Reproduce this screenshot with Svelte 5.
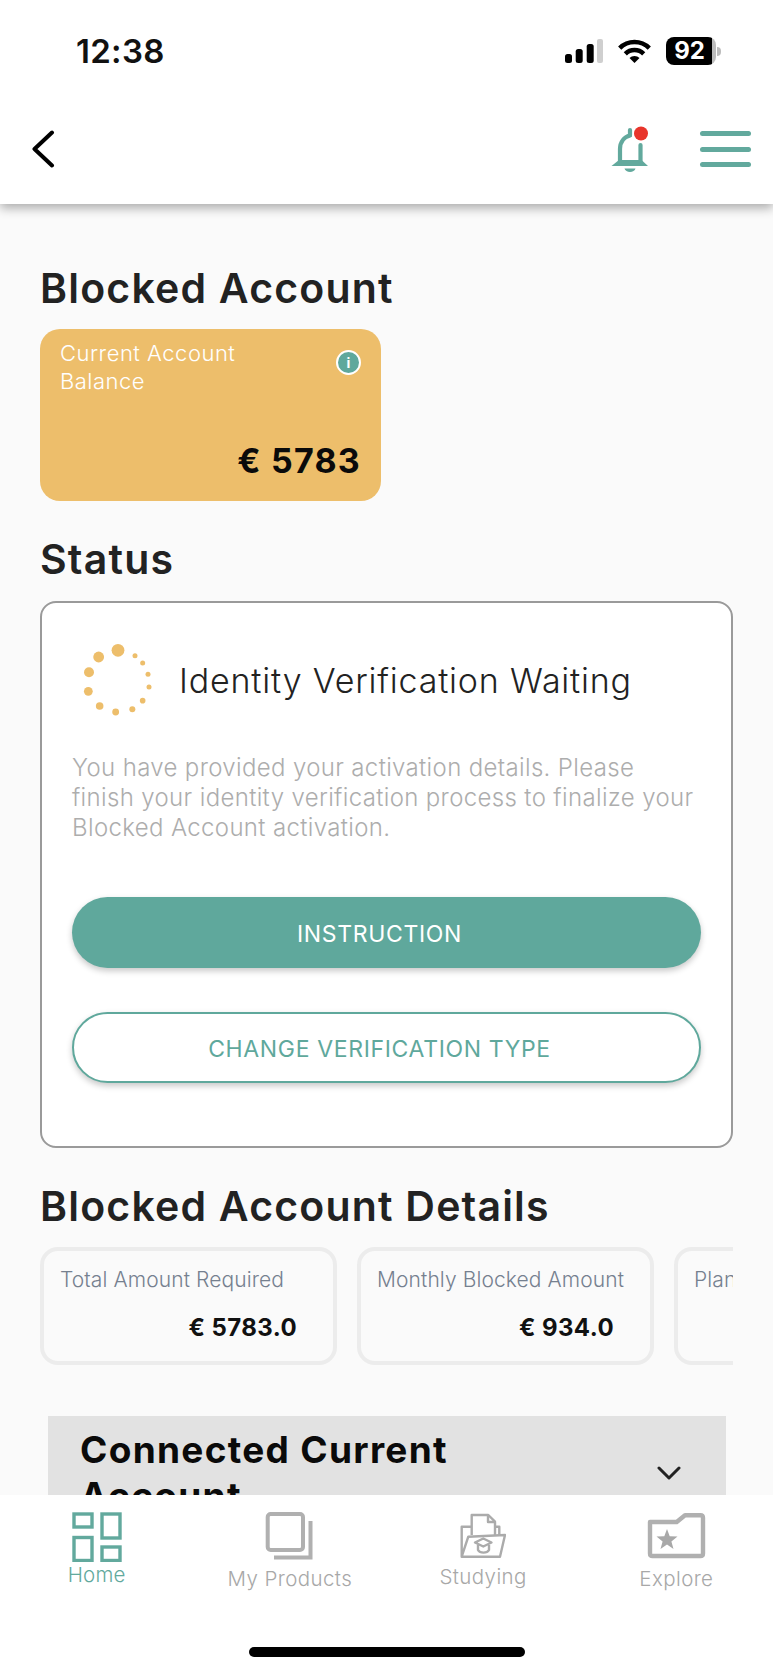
<script>
  const dots = [
    [174,91,6.4],[116,111,5.4],[87,157,5],[85,214,4.4],[119,258,3.8],[167,276,3.4],
    [217,268,3],[248,242,2.8],[267,201,2.5],[264,163,2.5],[248,129,2.5],[225,107,2.5]
  ].map(([x,y,r]) => ({ x: x/3 - 22, y: y/3 - 21, r }));
</script>

<div class="screen">
  <header class="topbar">
    <div class="status">
      <span class="time">12:38</span>
      <div class="status-icons">
        <svg class="signal" width="38" height="24" viewBox="0 0 38 24" aria-hidden="true">
          <rect x="0" y="15" width="7" height="9" rx="2.5" fill="#000"/>
          <rect x="10.7" y="10" width="7" height="14" rx="2.5" fill="#000"/>
          <rect x="21.7" y="5" width="7" height="19" rx="2.5" fill="#000"/>
          <rect x="32" y="0" width="6" height="24" rx="2" fill="#cfcfcf"/>
        </svg>
        <svg width="33" height="26" viewBox="0 0 33 26" aria-hidden="true">
          <path d="M1.7 10.2A21 21 0 0 1 31.3 10.2" fill="none" stroke="#000" stroke-width="4.5"/>
          <path d="M7.3 15.8A13 13 0 0 1 25.7 15.8" fill="none" stroke="#000" stroke-width="4.5"/>
          <path d="M16.5 25L11.5 20A7 7 0 0 1 21.5 20Z" fill="#000"/>
        </svg>
        <div class="battery"><span class="battery-body">92</span><span class="battery-nub"></span></div>
      </div>
    </div>
    <div class="toolbar">
      <svg width="24" height="38" viewBox="0 0 24 38" aria-hidden="true">
        <path d="M21 2.5L3.5 19L21 35.5" fill="none" stroke="#000" stroke-width="4" stroke-linecap="round" stroke-linejoin="round"/>
      </svg>
      <div class="toolbar-right">
        <svg width="40" height="48" viewBox="0 0 40 48" aria-hidden="true">
          <g fill="none" stroke="#62a99d" stroke-width="4.2" stroke-linecap="round">
            <path d="M10 37V24C10 17 14 12 20 10.5"/>
            <path d="M20 5V10"/>
            <path d="M30.5 20V37"/>
          </g>
          <path d="M9 35L1.5 41H38L31.5 35Z" fill="#62a99d"/>
          <path d="M14.5 43.5H25.5C24.5 48 15.5 48 14.5 43.5Z" fill="#62a99d"/>
          <circle cx="31" cy="8.5" r="7" fill="#e8352b"/>
        </svg>
        <div class="menu"><i></i><i></i><i></i></div>
      </div>
    </div>
  </header>

  <main class="content">
    <h1 class="first">Blocked Account</h1>
    <section class="balance">
      <div class="balance-top">
        <p>Current Account<br />Balance</p>
        <span class="info">i</span>
      </div>
      <strong>€ 5783</strong>
    </section>

    <h1 class="second">Status</h1>
    <section class="status-card">
      <div class="status-head">
        <svg width="72" height="78" viewBox="0 0 72 78" aria-hidden="true">
          {#each dots as d}
            <circle cx={d.x} cy={d.y} r={d.r} fill="#edbe6b"/>
          {/each}
        </svg>
        <h2>Identity Verification Waiting</h2>
      </div>
      <p class="desc">You have provided your activation details. Please finish your identity verification process to finalize your Blocked Account activation.</p>
      <button class="btn primary">INSTRUCTION</button>
      <button class="btn outline">CHANGE VERIFICATION TYPE</button>
    </section>

    <h1 class="second">Blocked Account Details</h1>
    <div class="details">
      <div class="detail"><span>Total Amount Required</span><b>€ 5783.0</b></div>
      <div class="detail"><span>Monthly Blocked Amount</span><b>€ 934.0</b></div>
      <div class="detail"><span>Planned Duration</span><b>12</b></div>
    </div>

    <div class="accordion">
      <h3>Connected Current Account</h3>
      <svg width="24" height="14" viewBox="0 0 24 14" aria-hidden="true">
        <path d="M2 2L12 12L22 2" fill="none" stroke="#222" stroke-width="3" stroke-linecap="round" stroke-linejoin="round"/>
      </svg>
    </div>
  </main>

  <nav class="tabs">
    <div class="tab-row">
      <div class="tab active home">
        <svg width="50" height="50" viewBox="0 0 50 50" aria-hidden="true">
          <g fill="none" stroke="#62a99d" stroke-width="3.4">
            <rect x="2" y="2" width="18" height="13"/>
            <rect x="30" y="2" width="18" height="24"/>
            <rect x="2" y="25.5" width="18" height="23"/>
            <rect x="30" y="35" width="18" height="13.5"/>
          </g>
        </svg>
        <span>Home</span>
      </div>
      <div class="tab products">
        <svg width="50" height="50" viewBox="0 0 50 50" aria-hidden="true">
          <g fill="none" stroke="#b0b0b0" stroke-width="4">
            <rect x="2.7" y="2" width="35.3" height="36" rx="3"/>
            <path d="M45.5 9V45.5H9"/>
          </g>
        </svg>
        <span>My Products</span>
      </div>
      <div class="tab studying">
        <svg width="46" height="50" viewBox="0 0 46 50" aria-hidden="true">
          <g transform="translate(0 2)" fill="none" stroke="#ababab" stroke-width="2.4" stroke-linejoin="round">
            <path d="M11.7 21V1H28.3L35 7.7V21"/>
            <path d="M28 1V8H35"/>
            <path d="M35 12.7H39.3V21"/>
            <path d="M11.7 12.7H1.7V42.7H40L45 21L8.3 22.7L1.7 42.7"/>
            <path d="M15 28.5L23.3 24.5L31.5 28.5L23.3 32.5Z"/>
            <path d="M18 31V36C20 39.5 27 39.5 29 36V31"/>
          </g>
        </svg>
        <span>Studying</span>
      </div>
      <div class="tab explore">
        <svg width="60" height="50" viewBox="0 0 60 50" aria-hidden="true">
          <path d="M4 10H30.7L39 3.2H54.5Q57 3.2 57 5.7V41.5Q57 44 54.5 44H6.5Q4 44 4 41.5Z" fill="none" stroke="#b0b0b0" stroke-width="4.4" stroke-linejoin="round"/>
          <polygon points="21,17 23.7,24.3 31.5,24.6 25.4,29.4 27.5,36.9 21,32.6 14.5,36.9 16.6,29.4 10.5,24.6 18.3,24.3" fill="#a8a8a8"/>
        </svg>
        <span>Explore</span>
      </div>
    </div>
    <div class="home-bar"></div>
  </nav>
</div>

<style>
  :global(body) {
    margin: 0;
    background: #fafafa;
  }
  .screen {
    width: 773px;
    height: 1673px;
    display: flex;
    flex-direction: column;
    overflow: hidden;
    font-family: Inter, "Liberation Sans", sans-serif;
    color: #222;
    background: #fafafa;
  }
  .topbar {
    position: relative;
    z-index: 2;
    flex: none;
    height: 204px;
    box-sizing: border-box;
    background: #fff;
    box-shadow: 0 4px 10px rgba(0, 0, 0, 0.32);
  }
  .status {
    height: 102px;
    box-sizing: border-box;
    padding: 0 52px 0 76px;
    display: flex;
    align-items: center;
    justify-content: space-between;
  }
  .time {
    font-size: 33px;
    letter-spacing: 0.3px;
    font-weight: 600;
    color: #111;
  }
  .status-icons {
    display: flex;
    align-items: center;
    gap: 15px;
  }
  .battery {
    display: flex;
    align-items: center;
    gap: 1px;
  }
  .battery-body {
    width: 50px;
    height: 28px;
    border-radius: 8px;
    background: linear-gradient(90deg, #000 92%, #bdbdbd 92%);
    color: #fff;
    font-size: 24px;
    font-weight: 700;
    line-height: 28px;
    text-align: center;
    padding-right: 3px;
    box-sizing: border-box;
  }
  .battery-nub {
    width: 4px;
    height: 9px;
    border-radius: 0 4px 4px 0;
    background: #bdbdbd;
  }
  .toolbar {
    height: 94px;
    box-sizing: border-box;
    padding: 0 22px 0 31px;
    display: flex;
    align-items: center;
    justify-content: space-between;
  }
  .toolbar-right {
    display: flex;
    align-items: center;
    gap: 50px;
  }
  .menu {
    width: 51px;
    display: flex;
    flex-direction: column;
    gap: 10.5px;
  }
  .menu i {
    display: block;
    height: 5px;
    border-radius: 3px;
    background: #62a99d;
  }
  .content {
    flex: 1;
    min-height: 0;
    overflow: hidden;
    padding: 0 40px;
  }
  h1 {
    margin: 33px 0 0;
    font-size: 41px;
    letter-spacing: 1.2px;
    line-height: 50px;
    font-weight: 600;
    color: #222;
  }
  h1.first {
    margin-top: 59px;
  }
  .balance {
    margin-top: 16px;
    width: 341px;
    height: 172px;
    box-sizing: border-box;
    padding: 10px 20px 20px 20px;
    border-radius: 20px;
    background: #edbe6b;
    display: flex;
    flex-direction: column;
    justify-content: space-between;
  }
  .balance-top {
    display: flex;
    justify-content: space-between;
    align-items: flex-start;
  }
  .balance p {
    margin: 0;
    font-size: 22px;
    letter-spacing: 0.5px;
    line-height: 28px;
    font-weight: 300;
    color: #fff;
  }
  .info {
    width: 25px;
    height: 25px;
    box-sizing: border-box;
    margin: 11px 0 0 0;
    border: 2px solid #fff;
    border-radius: 50%;
    background: #5fa89c;
    color: #fff;
    font-size: 14px;
    font-weight: 700;
    line-height: 21px;
    text-align: center;
  }
  .balance strong {
    align-self: flex-end;
    font-size: 34px;
    letter-spacing: 1.2px;
    line-height: 40px;
    font-weight: 700;
    color: #0a0a0a;
  }
  .status-card {
    margin-top: 17px;
    height: 547px;
    box-sizing: border-box;
    padding: 38px 30px 0;
    border: 2px solid #9a9a9a;
    border-radius: 16px;
    background: #fff;
  }
  .status-head {
    display: flex;
    align-items: center;
    height: 78px;
    padding-left: 10px;
    gap: 25px;
  }
  .status-head h2 {
    margin: 0;
    font-size: 34px;
    letter-spacing: 0.8px;
    font-weight: 300;
    color: #222;
    white-space: nowrap;
  }
  .desc {
    margin: 34px 0 0;
    font-size: 24px;
    letter-spacing: 0.35px;
    line-height: 30px;
    font-weight: 300;
    color: #adadad;
  }
  .btn {
    display: block;
    width: 100%;
    height: 71px;
    box-sizing: border-box;
    padding: 2px 14px 0 0;
    border-radius: 36px;
    font-family: inherit;
    font-size: 23px;
    letter-spacing: 0.65px;
    font-weight: 400;
    box-shadow: 0 3px 6px rgba(0, 0, 0, 0.22);
  }
  .primary {
    margin-top: 54px;
    border: 0;
    background: #5fa89c;
    color: #fff;
  }
  .outline {
    margin-top: 44px;
    border: 2px solid #5fa89c;
    background: #fff;
    color: #5fa89c;
  }
  .details {
    margin-top: 16px;
    display: flex;
    gap: 20px;
    overflow: hidden;
  }
  .detail {
    flex: none;
    width: 297px;
    height: 118px;
    box-sizing: border-box;
    padding: 16px 36px 0 16px;
    border: 4px solid #ececec;
    border-radius: 18px;
    display: flex;
    flex-direction: column;
  }
  .detail span {
    font-size: 21px;
    letter-spacing: 0.1px;
    line-height: 26px;
    font-weight: 300;
    color: #75808f;
    white-space: nowrap;
  }
  .detail b {
    margin-top: 20px;
    align-self: flex-end;
    font-size: 24px;
    letter-spacing: 0.4px;
    line-height: 30px;
    font-weight: 700;
    color: #111;
  }
  .accordion {
    margin: 51px 7px 0 8px;
    height: 115px;
    box-sizing: border-box;
    padding: 11px 45px 12px 32px;
    background: #e2e2e2;
    display: flex;
    align-items: center;
    justify-content: space-between;
  }
  .accordion h3 {
    margin: 0;
    width: 400px;
    font-size: 37px;
    letter-spacing: 1.3px;
    line-height: 46px;
    font-weight: 700;
    color: #0a0a0a;
  }
  .tabs {
    flex: none;
    height: 178px;
    box-sizing: border-box;
    padding-top: 17px;
    background: #fff;
    display: flex;
    flex-direction: column;
    align-items: center;
  }
  .tab-row {
    width: 100%;
    display: grid;
    grid-template-columns: repeat(4, 1fr);
  }
  .tab {
    display: flex;
    flex-direction: column;
    align-items: center;
    color: #a8a8a8;
  }
  .tab span {
    font-size: 20.5px;
    letter-spacing: 0.4px;
    line-height: 24px;
    font-weight: 300;
    white-space: nowrap;
  }
  .tab.active {
    color: #62a99d;
  }
  .tab.home span {
    margin-top: 1px;
    letter-spacing: 0.2px;
  }
  .products span,
  .explore span {
    margin-top: 5px;
  }
  .studying span {
    margin-top: 3px;
  }
  .home-bar {
    width: 276px;
    height: 10px;
    margin-top: auto;
    margin-bottom: 16px;
    border-radius: 5px;
    background: #000;
  }
</style>
